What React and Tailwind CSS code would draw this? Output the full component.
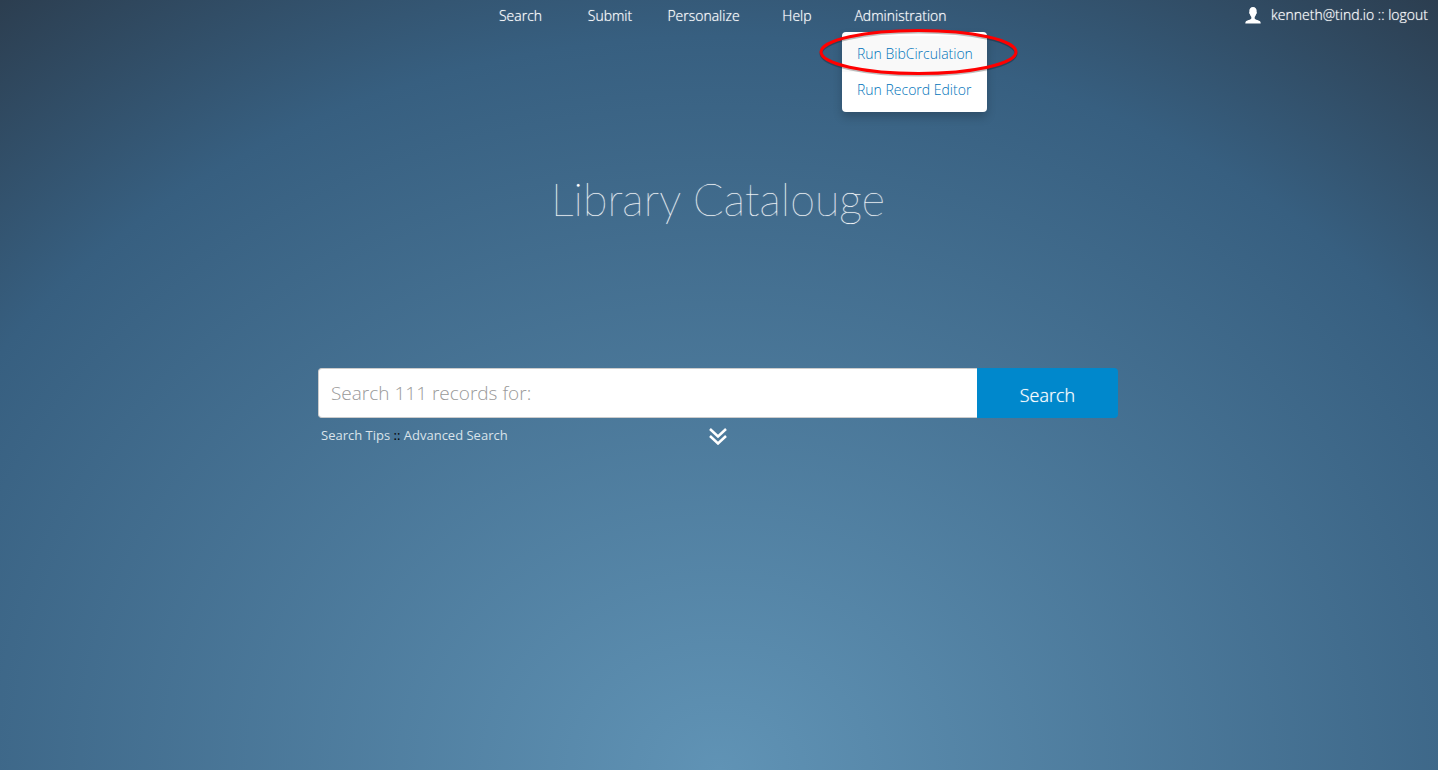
import { useState } from "react";

const NAV = [
  { label: "Search", width: "w-[89px]" },
  { label: "Submit", width: "w-[90px]" },
  { label: "Personalize", width: "w-[97px]" },
  { label: "Help", width: "w-[90px]" },
  { label: "Administration", width: "w-[117px]" },
];

function UserIcon() {
  return (
    <svg viewBox="0 0 16 17" className="h-[17px] w-4" fill="currentColor" aria-hidden="true">
      <path d="M8 0C5.600 0 4.300 1.700 4.300 4c0 .5.100.8.100 1-.4.200-.4.700-.2 1.300.1.500.4.800.7.900.2 1.200.8 2.100 1.400 2.700v1.500C5.900 12.700 1.800 13 .8 14.500.4 15.200.3 16 .3 16.600h15.400c0-.6-.1-1.400-.5-2.100-1-1.500-5.100-1.800-5.500-3.100V9.900c.6-.6 1.200-1.500 1.400-2.700.3-.1.600-.4.700-.9.200-.6.200-1.100-.2-1.300 0-.2.100-.5.100-1C11.700 1.700 10.400 0 8 0z" />
    </svg>
  );
}

function AdminMenu() {
  return (
    <div className="absolute left-0 top-8 z-10 w-[145px] rounded bg-white py-1 text-left text-[14px] font-light leading-5 text-[#0074ba] shadow-[0_5px_10px_rgba(0,0,0,0.2)] [text-shadow:none]">
      <a href="#circulation" className="block whitespace-nowrap bg-[#f9f9f9] px-[15px] py-2">Run BibCirculation</a>
      <a href="#editor" className="block whitespace-nowrap px-[15px] py-2">Run Record Editor</a>
      <svg
        viewBox="0 0 204 54"
        className="pointer-events-none absolute left-[-25px] top-[-7px] h-[54px] w-[204px] max-w-none"
        fill="none"
        aria-hidden="true"
      >
        <ellipse cx="101.500" cy="28.500" rx="97.500" ry="21.500" stroke="#000" strokeOpacity=".25" strokeWidth="3" />
        <ellipse cx="101.500" cy="27" rx="97.500" ry="21.500" stroke="#ff0000" strokeWidth="3" />
      </svg>
    </div>
  );
}

export default function App() {
  const [query, setQuery] = useState("");
  return (
    <div className="min-h-screen bg-[radial-gradient(81%_127%_at_50%_100%,#6093b5_0%,#375f80_75%,#2c3e50_100%)] pr-[2px] font-['Open_Sans',sans-serif] text-white">
      <header className="relative flex h-8 justify-center text-[14px] font-light leading-8 [text-shadow:0_0_1px_rgba(255,255,255,0.7)]">
        <nav className="flex pr-px text-center" aria-label="Main">
          {NAV.map((item) => (
            <div key={item.label} className={"relative " + item.width}>
              <a href={"#" + item.label.toLowerCase()}>{item.label}</a>
              {item.label === "Administration" && <AdminMenu />}
            </div>
          ))}
        </nav>
        <div className="absolute right-2 top-0 flex items-center gap-[10px] leading-[30px]">
          <UserIcon />
          <span>
            <a href="#account">kenneth@tind.io</a> :: <a href="#logout">logout</a>
          </span>
        </div>
      </header>

      <main className="mx-auto w-full max-w-[800px]">
        <h1 className="pt-[137px] text-center font-['Lato',sans-serif] text-[45px] font-extralight leading-[60px] [text-shadow:0_0_1px_rgba(255,255,255,0.8)]">
          Library Catalouge
        </h1>
        <form className="mt-[139px] flex h-[50px]" onSubmit={(e) => e.preventDefault()}>
          <input
            type="text"
            aria-label="Search records"
            placeholder="Search 111 records for:"
            value={query}
            onChange={(e) => setQuery(e.target.value)}
            className="min-w-0 flex-1 rounded-l border border-r-0 border-[#cccccc] bg-white px-3 text-[19px] font-light text-[#555555] outline-none placeholder:text-[#999999]"
          />
          <button type="submit" className="w-[141px] rounded-r bg-[#0088cc] pt-1 text-[18px] font-light [text-shadow:0_0_1px_rgba(255,255,255,0.7)]">
            Search
          </button>
        </form>
        <div className="grid grid-cols-3 px-[3px] pt-[7px] text-[13px] leading-5">
          <div className="text-[#d9e3ea]">
            <a href="#tips">Search Tips</a> <span className="text-black">::</span> <a href="#advanced">Advanced Search</a>
          </div>
          <button type="button" aria-label="Show more" className="justify-self-center pt-[3px]">
            <svg viewBox="0 0 18 17" className="h-[17px] w-[18px]" fill="none" stroke="currentColor" strokeWidth="2.500" aria-hidden="true">
              <path d="M1 1l8 7.500L17 1M1 8l8 7.500L17 8" />
            </svg>
          </button>
        </div>
      </main>
    </div>
  );
}
